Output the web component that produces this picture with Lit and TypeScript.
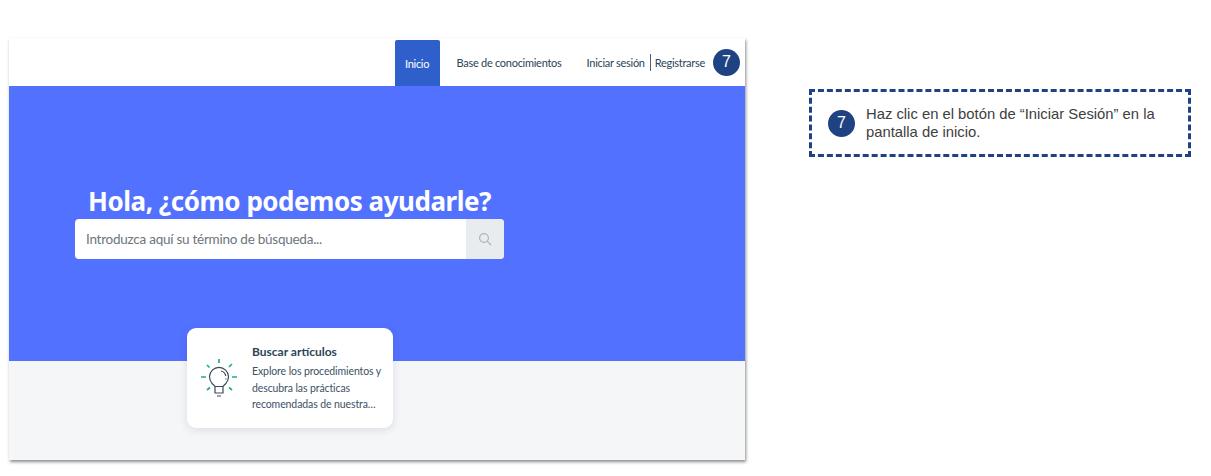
import { LitElement, html, css } from "lit";
import { customElement } from "lit/decorators.js";

@customElement("app-root")
export class AppRoot extends LitElement {
  static styles = css`
    :host { display: block; width: 1211px; height: 476px; background: #fff; overflow: hidden; font-family: "Noto Sans", sans-serif; }
    .page { display: flex; align-items: flex-start; padding: 38px 0 0 9px; }
    .shot { width: 736px; height: 422px; display: flex; flex-direction: column; box-shadow: 1px 2px 3px rgba(0,0,0,.45); background: #f4f6f8; flex: none; }
    .nav { height: 48px; background: #fff; display: flex; align-items: stretch; justify-content: flex-end; padding-right: 5px; box-sizing: border-box; flex: none; color: #2b4456; font-family: "Lato", sans-serif; font-size: 11px; letter-spacing: -.28px; }
    .nav-tab { display: flex; align-items: center; }
    .active { width: 45px; margin-top: 2px; justify-content: center; background: #2f5fcb; color: #fff; border-radius: 2px 2px 0 0; }
    .kb { margin-left: 17px; width: 104px; white-space: nowrap; }
    .auth { display: flex; align-items: center; margin-left: 26px; }
    .sep { width: 1px; height: 17px; background: #4a6272; margin: 0 4px 0 5px; }
    .badge { width: 27px; height: 27px; border-radius: 50%; background: #1f4283; color: #fff; display: flex; align-items: center; justify-content: center; font: 16px "Liberation Sans", sans-serif; letter-spacing: 0; flex: none; }
    .nav .badge { margin-left: 8px; align-self: center; }
    .hero { height: 275px; background: #5271ff; box-sizing: border-box; padding: 97px 0 0 66px; flex: none; }
    h1 { margin: 0; width: 429px; text-align: center; color: #fff; font: 700 26px/36px "Noto Sans", sans-serif; letter-spacing: -.48px; white-space: nowrap; }
    .search { width: 429px; height: 40px; background: #fff; border-radius: 4px; display: flex; overflow: hidden; }
    .input { flex: 1; display: flex; align-items: center; padding-left: 11px; color: #6c757d; font: 13.5px "Lato", sans-serif; letter-spacing: -.25px; }
    .sbtn { width: 38px; background: #e9ecef; display: flex; align-items: center; justify-content: center; }
    .bottom { flex: 1; padding-left: 178px; }
    .card { width: 206px; height: 100px; margin-top: -33px; background: #fff; border-radius: 9px; box-shadow: 0 2px 8px rgba(40,50,70,.12); display: flex; box-sizing: border-box; padding: 16px 10px 0 14px; position: relative; }
    .icon { width: 36px; height: 38px; margin: 15px 15px 0 0; flex: none; }
    .card h2 { margin: 0; font: 700 12px/16px "Lato", sans-serif; color: #2b4456; }
    .card p { margin: 3px 0 0; width: 132px; font: 10.5px/16.5px "Lato", sans-serif; letter-spacing: -.1px; color: #3c5166; white-space: nowrap; }
    .note { margin: 51px 0 0 64px; width: 382px; height: 68px; box-sizing: border-box; border: 3px dashed #1f4283; display: flex; align-items: center; padding: 0 20px 0 16px; color: #404040; font: 14.8px/18px "Liberation Sans", sans-serif; }
    .note .badge { margin-right: 11px; width: 27px; height: 27px; }
    .note span.t { display: block; }
  `;

  render() {
    return html`<div class="page">
      <div class="shot">
        <div class="nav">
          <div class="nav-tab active">Inicio</div>
          <div class="nav-tab kb">Base de conocimientos</div>
          <div class="auth"><span>Iniciar sesión</span><span class="sep"></span><span>Registrarse</span></div>
          <div class="badge">7</div>
        </div>
        <div class="hero">
          <h1>Hola, ¿cómo podemos ayudarle?</h1>
          <div class="search">
            <div class="input">Introduzca aquí su término de búsqueda...</div>
            <div class="sbtn">
              <svg width="14" height="14" viewBox="0 0 14 14" fill="none" stroke="#a9b6bf" stroke-width="1.2"><circle cx="6" cy="6" r="4.4"/><path d="M9.3 9.3 13 13"/></svg>
            </div>
          </div>
        </div>
        <div class="bottom">
          <div class="card">
            <svg class="icon" viewBox="0 0 36 38" fill="none">
              <path stroke="#1fae85" stroke-width="1.7" d="M18 0v4M0 18h5M31 18h5M6 6l2.500 2.500M31 5l-3 3M6 31l3-2.500M31 31l-3-2.500"/>
              <g stroke="#3b4a5a" stroke-width="1.2">
                <path d="M14 27.500c-.5-1-2-2-3-3.200a9.500 9.500 0 1 1 14 0c-1 1.200-2.500 2.200-3 3.200z"/>
                <path d="M14 27.500V34h8v-6.500M16 37h4"/>
                <path d="M20 12a6.500 6.500 0 0 1 4.800 5M24.800 19.500v1"/>
              </g>
            </svg>
            <div>
              <h2>Buscar artículos</h2>
              <p>Explore los procedimientos y<br />descubra las prácticas<br />recomendadas de nuestra…</p>
            </div>
          </div>
        </div>
      </div>
      <div class="note">
        <div class="badge">7</div>
        <span class="t">Haz clic en el botón de “Iniciar Sesión” en la pantalla de inicio.</span>
      </div>
    </div>`;
  }
}
